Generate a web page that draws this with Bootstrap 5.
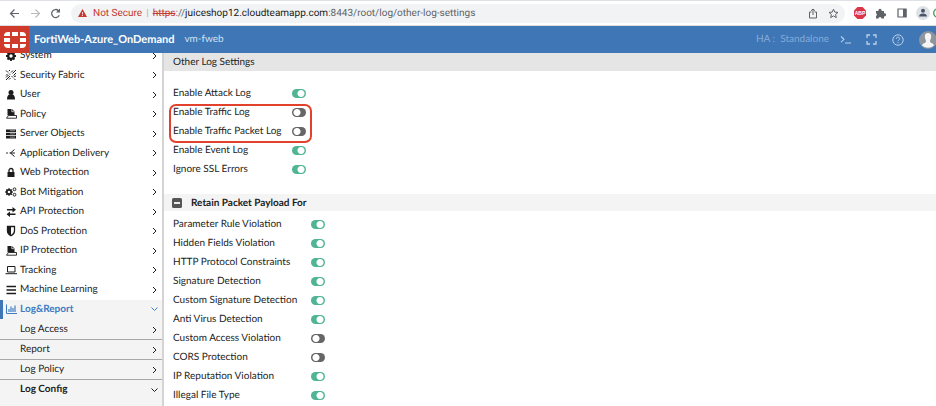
<!DOCTYPE html>
<html lang="en">
<head>
<meta charset="utf-8">
<meta name="viewport" content="width=device-width, initial-scale=1">
<title>FortiWeb - Other Log Settings</title>
<link href="https://cdn.jsdelivr.net/npm/bootstrap@5.3.0/dist/css/bootstrap.min.css" rel="stylesheet">
<style>
body{font-family:Lato,"Liberation Sans",sans-serif;font-size:10px;line-height:19px;color:#1c1c1c;background:#fff;text-rendering:geometricPrecision}
a{color:inherit;text-decoration:none}
button{border:0;background:none;padding:0;color:inherit;line-height:1;display:flex;align-items:center;justify-content:center}
svg{display:block;flex:none}
.chrome-bar{height:26px;border-top:1px solid #dee1e6;border-bottom:1px solid #dcdee0;padding:0 0 0 8px;color:#5f6368;font-family:Roboto,"Liberation Sans",sans-serif}
.chrome-bar button{width:13px;height:14px}
.history-nav{gap:8px;width:54px}
.omnibox{background:#f1f3f4;border-radius:10px;height:19px;padding:0 5px 0 7px;margin-left:9px;margin-right:8px}
.not-secure{color:#c5392f;padding-left:6px}
.bar-sep{padding:0 4px;color:#b0b3b8}
.url{color:#5f6368}
.url del{color:#c5392f}
.url b{font-weight:400;color:#202124}
.app-bar{background:#3e76b6;height:27px;color:#fff}
.brand-logo{background:#cf3a2b;width:29px;height:27px}
.product{font-size:11px;font-weight:700;padding-left:5px}
.host{color:#d3e1f1;padding-left:10px}
.app-tools{color:#bcd1e9;gap:15px}
.ha{color:#84aad6;margin-right:-4px}
.side{width:164px;border-right:2px solid #d4d4d4;background:#f4f4f4;overflow:hidden}
.menu{margin-top:-7px;display:grid;grid-auto-rows:1fr;min-height:273px;background:#fff}
.menu a,.submenu a{display:flex;align-items:center;height:100%;padding:0 4px 0 5px}
.menu svg.ic{width:12px;height:12px;margin-right:3px}
.menu .active{background:#f4f4f4;color:#3e7cc4;font-weight:700;border-left:3px solid #3e76b6;padding-left:2px}
.submenu{padding-top:1px}
.submenu a{padding-left:20px;height:19px}
.submenu li+li{border-top:1px solid #a8a8a8}
.chev{margin-left:auto}
.page-title{background:#e5e5e5;height:18px;line-height:18px;padding-left:9px;font-size:10px;font-weight:400}
.settings{padding-left:9px;white-space:nowrap}
.general{padding-top:13px}
.setting{display:flex;align-items:center;height:19px}
.setting label{width:119px}
.wide label{width:138px}
.switch{appearance:none;width:14px;height:9px;margin:0;border-radius:5px;background:radial-gradient(circle at 5px 50%,#fff 3px,transparent 4px) #666}
.switch:checked{background:radial-gradient(circle at 9px 50%,#fff 3px,transparent 4px) #4fb594}
.callout{position:absolute;left:5px;top:33px;width:143px;height:39px;border:2px solid #e2412e;border-radius:7px;pointer-events:none}
.section-head{background:#f4f4f4;height:17px;margin-top:15px;padding-left:8px;font-weight:700;font-size:10px}
.section-head button{margin-right:9px}
</style>
<script src="https://cdn.jsdelivr.net/npm/bootstrap@5.3.0/dist/js/bootstrap.bundle.min.js"></script>
</head>
<body class="vh-100 d-flex flex-column overflow-hidden">
<svg width="0" height="0" class="position-absolute">
<symbol id="chev-r" viewBox="0 0 7 8"><path d="M2 1l3 3-3 3" fill="none" stroke="currentColor" stroke-width="1"/></symbol>
<symbol id="chev-d" viewBox="0 0 7 8"><path d="M.5 2.500l3 3 3-3" fill="none" stroke="currentColor" stroke-width="1"/></symbol>
<symbol id="stamp" viewBox="0 0 12 12"><path d="M2.500 1h4.500l2.500 2.500v4h-7z" fill="currentColor"/><path d="M6.800 1v2.700h2.700" fill="none" stroke="#fff" stroke-width=".7"/><path d="M3.500 7.500h8v2.700h-10z" fill="#fff" stroke="currentColor" stroke-width=".9"/></symbol>
</svg>
<header class="chrome-bar d-flex align-items-center flex-shrink-0">
<div class="history-nav d-flex">
<button aria-label="Back"><svg width="11" height="11" viewBox="0 0 11 11" fill="none" stroke="#5f6368" stroke-width="1.2"><path d="M10 5.500H1.500M5.500 1.500l-4 4 4 4"/></svg></button>
<button aria-label="Forward"><svg width="11" height="11" viewBox="0 0 11 11" fill="none" stroke="#b8babd" stroke-width="1.2"><path d="M1 5.500h8.500M5.500 1.500l4 4-4 4"/></svg></button>
<button aria-label="Reload"><svg width="11" height="11" viewBox="0 0 11 11" fill="none" stroke="#5f6368" stroke-width="1.3"><path d="M9.300 7.200A4 4 0 1 1 8.500 2.700"/><path d="M6 4.500h4v-4z" fill="#5f6368" stroke="none"/></svg></button>
</div>
<div class="omnibox d-flex align-items-center flex-grow-1">
<svg width="9" height="8" viewBox="0 0 9 8"><path d="M4.500 0L9 8H0z" fill="#c5392f"/><path d="M4.500 3v2.500M4.500 6v1" stroke="#fff" stroke-width=".8"/></svg>
<span class="not-secure">Not Secure</span><span class="bar-sep">|</span>
<span class="url flex-grow-1 text-nowrap"><del>https</del>://<b>juiceshop12.cloudteamapp.com</b>:8443/root/log/other-log-settings</span>
<div class="d-flex gap-2">
<button aria-label="Share"><svg width="10" height="11" viewBox="0 0 10 11" fill="none" stroke="#5f6368"><path d="M3.500 4H1.500v6h7V4h-2M5 7V1M3 2.800L5 1l2 1.800"/></svg></button>
<button aria-label="Bookmark"><svg width="11" height="11" viewBox="0 0 11 11" fill="none" stroke="#5f6368"><path d="M5.500 1.200l1.300 2.900 3.200.3-2.400 2.100.7 3.100-2.800-1.700-2.800 1.700.7-3.100L1 4.400l3.200-.3z"/></svg></button>
</div></div>
<div class="d-flex gap-2 align-items-center">
<button aria-label="Ad blocker"><svg width="12" height="12" viewBox="0 0 12 12"><path d="M3.500 0h5L12 3.500v5L8.500 12h-5L0 8.500v-5z" fill="#dc3545"/><text x="6" y="7.800" text-anchor="middle" font-size="5" font-weight="700" fill="#fff" font-family="Liberation Sans">ABP</text></svg></button>
<button aria-label="Extensions"><svg width="11" height="11" viewBox="0 0 11 11"><path d="M1 3h2.500a1.600 1.600 0 1 1 3.000 0H9v2.300a1.600 1.600 0 1 1 0 3.000V10.500H6.500a1.500 1.500 0 0 0-3 0H1V8a1.500 1.500 0 0 0 0-2.700z" fill="#5f6368"/></svg></button>
<button aria-label="Side panel"><svg width="10" height="10" viewBox="0 0 10 10"><path d="M1 1h8v8H1z" fill="none" stroke="#5f6368" stroke-width="1.200"/><path d="M6 1h3.500v8H6z" fill="#5f6368"/></svg></button>
<div class="d-flex align-items-center gap-1"><button aria-label="Profile"><svg width="14" height="14" viewBox="0 0 14 14"><circle cx="7" cy="7" r="7" fill="#dee1e6"/><circle cx="7" cy="4.800" r="2" fill="#4a5568"/><path d="M3 10.500c0-4 8-4 8 0z" fill="#4a5568"/></svg></button>
<svg width="3" height="10" viewBox="0 0 3 10"><circle cx="5" cy="5" r="4.300" fill="none" stroke="#3f9b52" stroke-width="1.300"/></svg></div>
</div>
</header>
<nav class="app-bar d-flex align-items-center flex-shrink-0">
<a href="#" class="brand-logo d-flex align-items-center justify-content-center" aria-label="Fortinet"><svg width="22" height="16" viewBox="0 0 22 16" fill="#fff"><path d="M8 0h6v4H8zM8 12h6v4H8zM0 6h6v4H0zM16 6h6v4h-6zM6 0v4H0a4 4 0 0 1 4-4zM16 0h2a4 4 0 0 1 4 4h-6zM0 12h6v4H4a4 4 0 0 1-4-4zM16 12h6a4 4 0 0 1-4 4h-2z"/></svg></a>
<span class="product">FortiWeb-Azure_OnDemand</span><span class="host">vm-fweb</span>
<div class="app-tools d-flex align-items-center ms-auto">
<span class="ha">HA :&nbsp; Standalone</span>
<button aria-label="Console"><svg width="11" height="9" viewBox="0 0 11 9" fill="none" stroke="currentColor" stroke-width="1.100"><path d="M1 1.500l3 2.800-3 2.800M5 8h6"/></svg></button>
<button aria-label="Full screen"><svg width="11" height="11" viewBox="0 0 11 11" fill="none" stroke="currentColor" stroke-width="1.300"><path d="M1 4V1h3M7 1h3v3M10 7v3H7M4 10H1V7"/></svg></button>
<button aria-label="Help"><svg width="12" height="12" viewBox="0 0 12 12" fill="none" stroke="currentColor"><circle cx="6" cy="6" r="5.200"/><path d="M4.300 4.800c0-2.300 3.400-2 3.400-.1C7.700 6 6 5.900 6 7.200M6 8.200v1"/></svg></button>
<button aria-label="Account"><svg width="17" height="18" viewBox="0 0 17 18"><circle cx="9" cy="9" r="9" fill="#8f959c"/><path d="M9 2c-3 0-3.500 2.500-3 5 .3 1.500 1 2 1 3.500C7 12 3.500 12 3 14.500a9 9 0 0 0 12 0C14.500 12 11 12 11 10.500c0-1.500.7-2 1-3.500.5-2.500 0-5-3-5z" fill="#f5f5f5"/></svg></button>
</div>
</nav>
<div class="d-flex flex-grow-1 overflow-hidden">
<aside class="side flex-shrink-0">
<ul class="menu list-unstyled mb-0">
<li><a href="#"><svg class="ic" viewBox="0 0 12 12"><circle cx="6" cy="6" r="2.800" fill="none" stroke="currentColor" stroke-width="2.200"/><path d="M6 1v2M6 9v2M1 6h2M9 6h2M2.500 2.500l1.400 1.400M8.100 8.100l1.400 1.400M9.500 2.500L8.100 3.900M3.900 8.100L2.500 9.500" stroke="currentColor" stroke-width="1.800"/></svg>System<svg class="chev" width="7" height="8"><use href="#chev-r"/></svg></a></li>
<li><a href="#"><svg class="ic" viewBox="0 0 12 12" fill="none" stroke="currentColor" stroke-width="1"><path d="M1 1.500l2 2M4 4.500l1.300 1.300M6.500 7l1.500 1.500M9 9.500l1.500 1.500M11 1L7.500 4.500M5 7l-4 4M5 1L3.800 2.200M8 1.500L6 3.500M11 4L8.500 6.500M1 6.500l1.500-1.500M3.500 6L1 8.500M4 10.500l1.500-1.500M9 7.500l2-.5"/></svg>Security Fabric<svg class="chev" width="7" height="8"><use href="#chev-r"/></svg></a></li>
<li><a href="#"><svg class="ic" viewBox="0 0 12 12" fill="currentColor"><circle cx="6" cy="3.500" r="2.500"/><path d="M2 10.500C2 7.500 3 6 4.300 5.600h3.400C9 6 10 7.500 10 10.500z"/></svg>User<svg class="chev" width="7" height="8"><use href="#chev-r"/></svg></a></li>
<li><a href="#"><svg class="ic"><use href="#stamp"/></svg>Policy<svg class="chev" width="7" height="8"><use href="#chev-r"/></svg></a></li>
<li><a href="#"><svg class="ic" viewBox="0 0 12 12"><path d="M1 1.500h10v2.500H1zM1 4.700h10v2.500H1zM1 7.900h10v2.500H1z" fill="currentColor"/><path d="M5 2.700h5M5 5.900h5M5 9.100h5" stroke="#bbb" stroke-width=".7"/></svg>Server Objects<svg class="chev" width="7" height="8"><use href="#chev-r"/></svg></a></li>
<li><a href="#"><svg class="ic" viewBox="0 0 12 12" fill="none" stroke="currentColor"><path d="M4.500 6H10M9.500 2.500L5.500 6l4 3.500"/><circle cx="2" cy="6" r=".8" fill="currentColor" stroke="none"/></svg>Application Delivery<svg class="chev" width="7" height="8"><use href="#chev-r"/></svg></a></li>
<li><a href="#"><svg class="ic" viewBox="0 0 12 12"><path d="M2.500 5h7v5h-7z" fill="currentColor"/><path d="M4 5V3.500a2 2 0 0 1 4 0V5" fill="none" stroke="currentColor" stroke-width="1.300"/></svg>Web Protection<svg class="chev" width="7" height="8"><use href="#chev-r"/></svg></a></li>
<li><a href="#"><svg class="ic" viewBox="0 0 12 12" fill="none" stroke="currentColor"><circle cx="4" cy="6" r="2.200" stroke-width="1.700"/><path d="M4 2.200v1M4 8.800v1M.2 6h1M6.800 6h1M1.400 3.400l.7.700M6 8l.7.700M6.600 3.400L6 4M2 8l-.7.700" stroke-width="1.400"/><circle cx="9.500" cy="3.300" r="1.400"/><circle cx="9.500" cy="8.700" r="1.400"/></svg>Bot Mitigation<svg class="chev" width="7" height="8"><use href="#chev-r"/></svg></a></li>
<li><a href="#"><svg class="ic" viewBox="0 0 12 12" fill="currentColor"><path d="M2 3h5.500V1L11 3.800 7.500 6.500v-2H2zM10.500 7.500H5v-2L1.500 8.300 5 11V9h5.500z"/></svg>API Protection<svg class="chev" width="7" height="8"><use href="#chev-r"/></svg></a></li>
<li><a href="#"><svg class="ic" viewBox="0 0 12 12"><path d="M2.500 1.500h7V6c0 2.500-1.800 3.800-3.500 4.700C4.300 9.800 2.500 8.500 2.500 6z" fill="none" stroke="currentColor" stroke-width="1.300"/><path d="M6 1.500H2.500V6c0 2.500 1.800 3.800 3.500 4.700z" fill="currentColor"/></svg>DoS Protection<svg class="chev" width="7" height="8"><use href="#chev-r"/></svg></a></li>
<li><a href="#"><svg class="ic"><use href="#stamp"/></svg>IP Protection<svg class="chev" width="7" height="8"><use href="#chev-r"/></svg></a></li>
<li><a href="#"><svg class="ic" viewBox="0 0 12 12" fill="none" stroke="currentColor"><path d="M2.500 2.500h7.500v5.500H2.500zM.5 9.700h11.500"/></svg>Tracking<svg class="chev" width="7" height="8"><use href="#chev-r"/></svg></a></li>
<li><a href="#"><svg class="ic" viewBox="0 0 12 12" stroke="currentColor" stroke-width="1.500"><path d="M1.500 2.500h9.500M1.500 6h9.500M1.500 9.500h9.500"/></svg>Machine Learning<svg class="chev" width="7" height="8"><use href="#chev-r"/></svg></a></li>
<li><a href="#" class="active"><svg class="ic" viewBox="0 0 12 12" fill="none" stroke="currentColor"><path d="M1.500 1.500v9H12"/><path d="M4 9V6M6 9V3.500M8 9V5M10 9V2.500" stroke-width="1.200"/></svg>Log&amp;Report<svg class="chev" width="7" height="8"><use href="#chev-d"/></svg></a></li>
</ul>
<ul class="submenu list-unstyled mb-0">
<li><a href="#">Log Access<svg class="chev" width="7" height="8"><use href="#chev-r"/></svg></a></li>
<li><a href="#">Report<svg class="chev" width="7" height="8"><use href="#chev-r"/></svg></a></li>
<li><a href="#">Log Policy<svg class="chev" width="7" height="8"><use href="#chev-r"/></svg></a></li>
<li><a href="#" class="fw-bold">Log Config<svg class="chev" width="7" height="8"><use href="#chev-d"/></svg></a></li>
</ul>
</aside>
<main class="flex-grow-1 overflow-hidden">
<h1 class="page-title mb-0">Other Log Settings</h1>
<form>
<div class="settings general position-relative">
<div class="setting"><label for="s1">Enable Attack Log</label><input class="switch" type="checkbox" role="switch" id="s1" checked></div>
<div class="setting"><label for="s2">Enable Traffic Log</label><input class="switch" type="checkbox" role="switch" id="s2"></div>
<div class="setting"><label for="s3">Enable Traffic Packet Log</label><input class="switch" type="checkbox" role="switch" id="s3"></div>
<div class="setting"><label for="s4">Enable Event Log</label><input class="switch" type="checkbox" role="switch" id="s4" checked></div>
<div class="setting"><label for="s5">Ignore SSL Errors</label><input class="switch" type="checkbox" role="switch" id="s5" checked></div>
<div class="callout"></div>
</div>
<h2 class="section-head d-flex align-items-center mb-1"><button type="button" aria-label="Collapse section"><svg width="10" height="10" viewBox="0 0 10 10"><rect width="10" height="10" rx="1.500" fill="#555"/><path d="M2 5h6" stroke="#fff" stroke-width="1.800"/></svg></button>Retain Packet Payload For</h2>
<div class="settings wide">
<div class="setting"><label for="p1">Parameter Rule Violation</label><input class="switch" type="checkbox" role="switch" id="p1" checked></div>
<div class="setting"><label for="p2">Hidden Fields Violation</label><input class="switch" type="checkbox" role="switch" id="p2" checked></div>
<div class="setting"><label for="p3">HTTP Protocol Constraints</label><input class="switch" type="checkbox" role="switch" id="p3" checked></div>
<div class="setting"><label for="p4">Signature Detection</label><input class="switch" type="checkbox" role="switch" id="p4" checked></div>
<div class="setting"><label for="p5">Custom Signature Detection</label><input class="switch" type="checkbox" role="switch" id="p5" checked></div>
<div class="setting"><label for="p6">Anti Virus Detection</label><input class="switch" type="checkbox" role="switch" id="p6" checked></div>
<div class="setting"><label for="p7">Custom Access Violation</label><input class="switch" type="checkbox" role="switch" id="p7"></div>
<div class="setting"><label for="p8">CORS Protection</label><input class="switch" type="checkbox" role="switch" id="p8"></div>
<div class="setting"><label for="p9">IP Reputation Violation</label><input class="switch" type="checkbox" role="switch" id="p9" checked></div>
<div class="setting"><label for="p10">Illegal File Type</label><input class="switch" type="checkbox" role="switch" id="p10" checked></div>
</div>
</form>
</main>
</div>
</body>
</html>
